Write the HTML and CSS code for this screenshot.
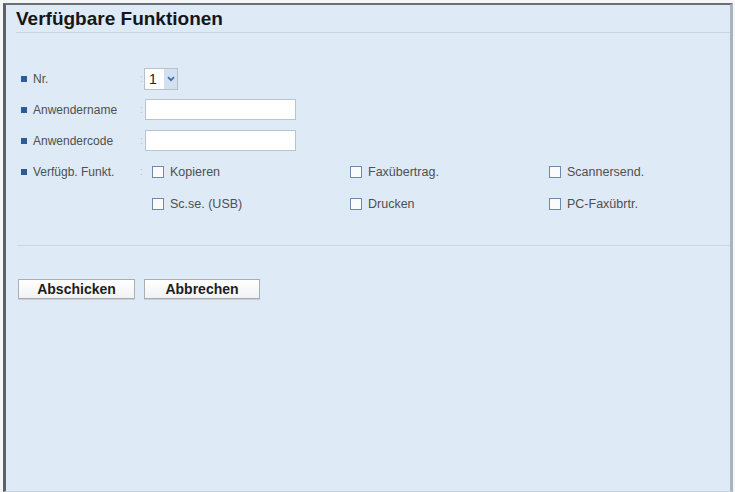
FILE: index.html
```html
<!DOCTYPE html>
<html lang="de">
<head>
<meta charset="utf-8">
<title>Verfügbare Funktionen</title>
<link rel="stylesheet" href="styles.css">
</head>
<body>
<div class="frame">
  <div class="head">
    <h1 class="title">Verfügbare Funktionen</h1>
  </div>
  <div class="form">
    <div class="row">
      <div class="label"><span class="bullet"></span>Nr.</div>
      <div class="colon">:</div>
      <div class="field">
        <div class="select"><span class="sel-val">1</span><span class="sel-btn"><svg width="8" height="6" viewBox="0 0 8 6"><path d="M1 1.2 L4 4.2 L7 1.2" fill="none" stroke="#3d6fb0" stroke-width="1.7"/></svg></span></div>
      </div>
    </div>
    <div class="row">
      <div class="label"><span class="bullet"></span>Anwendername</div>
      <div class="colon">:</div>
      <div class="field"><div class="input"></div></div>
    </div>
    <div class="row">
      <div class="label"><span class="bullet"></span>Anwendercode</div>
      <div class="colon">:</div>
      <div class="field"><div class="input"></div></div>
    </div>
    <div class="row row-top">
      <div class="label"><span class="bullet"></span>Verfügb. Funkt.</div>
      <div class="colon">:</div>
      <div class="checks">
        <label class="check"><span class="box"></span>Kopieren</label>
        <label class="check"><span class="box"></span>Faxübertrag.</label>
        <label class="check"><span class="box"></span>Scannersend.</label>
        <label class="check"><span class="box"></span>Sc.se. (USB)</label>
        <label class="check"><span class="box"></span>Drucken</label>
        <label class="check"><span class="box"></span>PC-Faxübrtr.</label>
      </div>
    </div>
  </div>
  <div class="sep"></div>
  <div class="buttons">
    <div class="btn">Abschicken</div>
    <div class="btn">Abbrechen</div>
  </div>
</div>
</body>
</html>
```
FILE: styles.css
```css
html, body {
  margin: 0;
  padding: 0;
  background: #f4f6f8;
  height: 100%;
}
body {
  font-family: "Liberation Sans", Arial, sans-serif;
  padding: 3px 2px 0 3px;
  box-sizing: border-box;
}
.frame {
  box-sizing: border-box;
  height: 489px;
  background: #deeaf6;
  border-left: 3px solid #5d6266;
  border-top: 2px solid #6a7075;
  border-right: 3px solid #a9b4bd;
  border-bottom: 1px solid #c7d3de;
}
.head {
  padding: 3px 0 0 10px;
}
.title {
  margin: 0;
  font-size: 19px;
  font-weight: bold;
  color: #161616;
  line-height: 22px;
  height: 24px;
  border-bottom: 1px solid #c9d5e1;
}
.form {
  padding: 30px 0 0 15px;
}
.row {
  display: flex;
  align-items: center;
  height: 31px;
}
.row-top {
  align-items: flex-start;
  height: auto;
}
.row-top .label, .row-top .colon {
  height: 31px;
}
.label {
  width: 119px;
  font-size: 12px;
  color: #4f4f4f;
  display: flex;
  align-items: center;
}
.bullet {
  width: 6px;
  height: 6px;
  background: #2d5d97;
  margin-right: 6px;
}
.colon {
  width: 5px;
  font-size: 10px;
  color: #b9c2cb;
  display: flex;
  align-items: center;
}
.select {
  display: flex;
  width: 34px;
  height: 22px;
  margin-left: -1px;
  box-sizing: border-box;
  border: 1px solid #b5c0ca;
  background: #fff;
}
.sel-val {
  width: 19px;
  font-size: 14px;
  line-height: 20px;
  padding-left: 4px;
  box-sizing: border-box;
  color: #222;
}
.sel-btn {
  flex: 1;
  background: #d3e0f0;
  display: flex;
  align-items: center;
  justify-content: center;
}
.input {
  width: 151px;
  height: 21px;
  box-sizing: border-box;
  border: 1px solid #b9c4ce;
  background: #fff;
}
.checks {
  display: grid;
  grid-template-columns: 198px 199px 160px;
  grid-auto-rows: 32px;
  padding-left: 7px;
}
.check {
  display: flex;
  align-items: center;
  font-size: 12.5px;
  color: #4f4f4f;
}
.box {
  width: 10px;
  height: 10px;
  border: 1px solid #6f8aa8;
  background: #fafbfc;
  margin-right: 6px;
}
.sep {
  margin: 25px 0 0 11px;
  height: 1px;
  background: #cbd7e3;
}
.buttons {
  display: flex;
  gap: 9px;
  padding: 33px 0 0 12px;
}
.btn {
  width: 117px;
  height: 20px;
  box-sizing: border-box;
  border: 1px solid #a7aeb5;
  background: linear-gradient(#ffffff, #f1f2f3);
  font-size: 14px;
  font-weight: bold;
  color: #1d1d1d;
  text-align: center;
  line-height: 18px;
  box-shadow: 0 1px 0 #c8ced4;
}
.btn + .btn {
  width: 116px;
}
```
